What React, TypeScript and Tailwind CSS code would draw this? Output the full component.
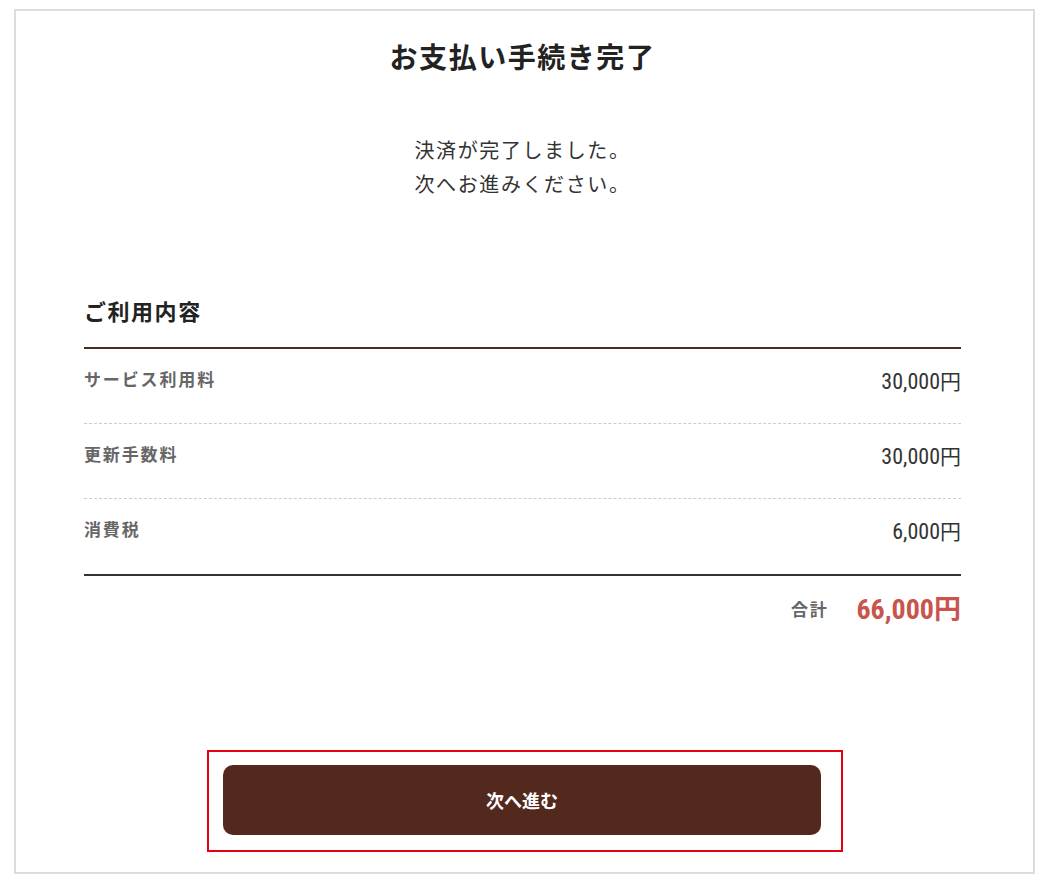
const jp = { fontFamily: '"Noto Sans CJK JP", "Noto Sans", sans-serif' };

type Item = { label: string; amount: string };

const items: Item[] = [
  { label: "サービス利用料", amount: "30,000" },
  { label: "更新手数料", amount: "30,000" },
  { label: "消費税", amount: "6,000" },
];

const numFont = "font-['Liberation_Sans_Narrow','Roboto_Condensed','Noto_Sans_CJK_JP',sans-serif]";

function Amount({ value }: { value: string }) {
  return (
    <span className="text-[22px] text-[#333]">
      <span className={numFont}>{value}</span>
      <span className="text-[21px]" style={jp}>円</span>
    </span>
  );
}

export default function App() {
  return (
    <div className="min-h-[880px] bg-white pt-[9px]" style={jp}>
      <div className="mx-[14px] h-[865px] w-[1021px] border-2 border-[#dcdcdc] pl-[68px] pr-[72px] pt-[23px]">
        <h1 className="text-center text-[28px] font-bold leading-[44px] tracking-[0.055em] text-[#222]">
          お支払い手続き完了
        </h1>
        <p className="mt-[55px] text-center text-[20px] leading-[34px] tracking-[0.08em] text-[#333]">
          決済が完了しました。
          <br />
          次へお進みください。
        </p>

        <h2 className="mt-[93px] text-[22px] font-bold leading-[32px] tracking-[0.07em] text-[#222]">
          ご利用内容
        </h2>
        <div className="mt-[21px] border-t-2 border-[#4b2a20]">
          {items.map((item, i) => (
            <div
              key={item.label}
              className={
                i < items.length - 1
                  ? "flex h-[75px] items-start justify-between border-b border-dashed border-[#cccccc] pt-[16px]"
                  : "flex h-[75px] items-start justify-between pt-[16px]"
              }
            >
              <span className="text-[17px] font-bold leading-[28px] tracking-[0.11em] text-[#666]">
                {item.label}
              </span>
              <span className="leading-[28px]">
                <Amount value={item.amount} />
              </span>
            </div>
          ))}
        </div>
        <div className="border-t-2 border-[#333]" />
        <div className="flex items-center justify-end gap-[28px] pt-[13px]">
          <span className="text-[17px] font-bold tracking-[0.1em] text-[#666]">合計</span>
          <span className="text-[28px] font-bold leading-[36px] text-[#c8544c]">
            <span className={numFont}>66,000</span>
            <span className="text-[27px]">円</span>
          </span>
        </div>

        <div className="mt-[122px] flex">
          <div className="ml-[123px] border-2 border-[#e60012] pb-[15px] pl-[14px] pr-[20px] pt-[13px]">
            <button className="flex h-[70px] w-[598px] items-center justify-center rounded-[10px] bg-[#53291e] text-[18px] font-bold text-white">
              次へ進む
            </button>
          </div>
        </div>
      </div>
    </div>
  );
}
